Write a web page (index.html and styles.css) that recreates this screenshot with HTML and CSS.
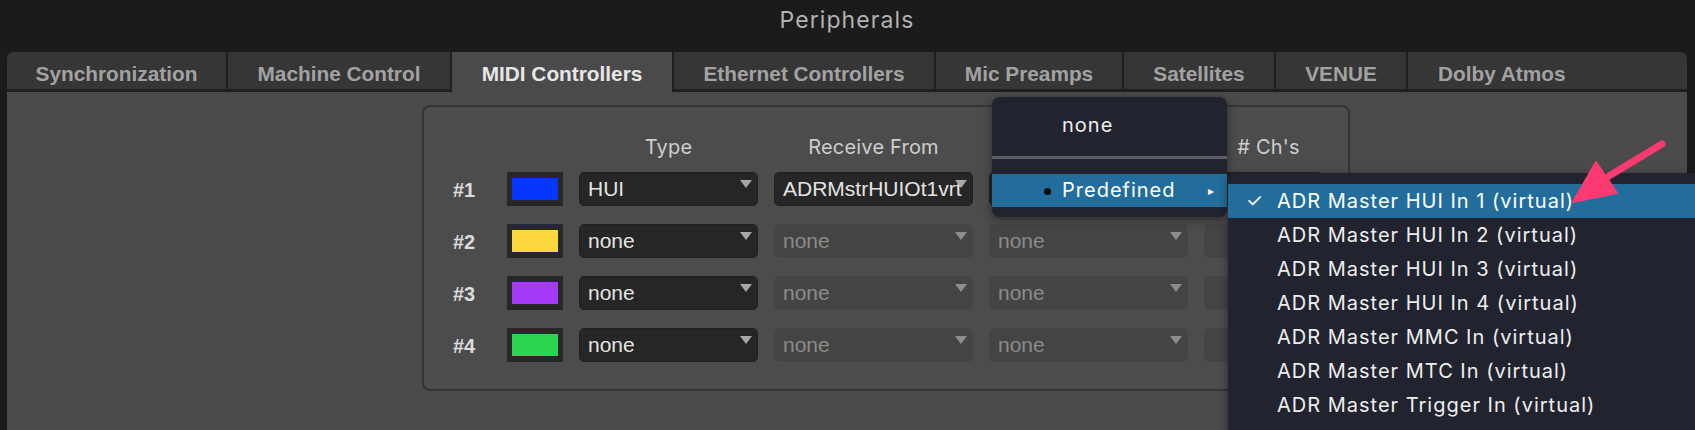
FILE: index.html
```html
<!DOCTYPE html>
<html lang="en">
<head>
<meta charset="utf-8">
<title>Peripherals</title>
<link rel="stylesheet" href="styles.css">
</head>
<body>
<div class="window">
  <header class="titlebar">Peripherals</header>
  <nav class="tabs">
    <div class="tab w1">Synchronization</div>
    <div class="tab w2">Machine Control</div>
    <div class="tab w3 active">MIDI Controllers</div>
    <div class="tab w4">Ethernet Controllers</div>
    <div class="tab w5">Mic Preamps</div>
    <div class="tab w6">Satellites</div>
    <div class="tab w7">VENUE</div>
    <div class="tab last">Dolby Atmos</div>
  </nav>
  <main class="panel">
    <section class="group">
      <div class="grid">
        <div class="hcell"></div><div class="hcell"></div>
        <div class="hcell hdr">Type</div>
        <div class="hcell hdr">Receive From</div>
        <div class="hcell"></div>
        <div class="hcell hdr ch">#&nbsp;Ch's</div>

        <div class="num">#1</div>
        <div class="swatch"><span class="c-blue"></span></div>
        <div class="dd">HUI</div>
        <div class="dd">ADRMstrHUIOt1vrt</div>
        <div class="dd"></div>
        <div class="dd"></div>

        <div class="num">#2</div>
        <div class="swatch"><span class="c-yellow"></span></div>
        <div class="dd">none</div>
        <div class="dd off">none</div>
        <div class="dd off">none</div>
        <div class="dd off"></div>

        <div class="num">#3</div>
        <div class="swatch"><span class="c-purple"></span></div>
        <div class="dd">none</div>
        <div class="dd off">none</div>
        <div class="dd off">none</div>
        <div class="dd off"></div>

        <div class="num">#4</div>
        <div class="swatch"><span class="c-green"></span></div>
        <div class="dd">none</div>
        <div class="dd off">none</div>
        <div class="dd off">none</div>
        <div class="dd off"></div>
      </div>
    </section>
  </main>

  <div class="menu popup">
    <div class="item plain">none</div>
    <div class="sep"></div>
    <div class="item hi"><span class="dot"></span>Predefined<span class="sub">&#9656;</span></div>
  </div>

  <div class="menu submenu">
    <div class="item hi"><span class="check">&#10003;</span>ADR Master HUI In 1 (virtual)</div>
    <div class="item">ADR Master HUI In 2 (virtual)</div>
    <div class="item">ADR Master HUI In 3 (virtual)</div>
    <div class="item">ADR Master HUI In 4 (virtual)</div>
    <div class="item">ADR Master MMC In (virtual)</div>
    <div class="item">ADR Master MTC In (virtual)</div>
    <div class="item">ADR Master Trigger In (virtual)</div>
  </div>

  <svg class="pointer" width="120" height="80" viewBox="0 0 120 80">
    <line x1="44" y1="44" x2="102" y2="9" stroke="#fb3a72" stroke-width="7" stroke-linecap="round"/>
    <polygon points="13,67 36,27 57,58" fill="#fb3a72" stroke="#fb3a72" stroke-width="2" stroke-linejoin="round"/>
  </svg>
</div>
</body>
</html>
```

FILE: styles.css
```css
* { box-sizing: border-box; }
html, body { margin: 0; padding: 0; }
body {
  background: #1b1b1b;
  width: 1695px;
  height: 430px;
  overflow: hidden;
  font-family: "Liberation Sans", Arial, sans-serif;
}
.window {
  position: relative;
  height: 430px;
  display: flex;
  flex-direction: column;
  padding: 0 8px 0 7px;
}
.titlebar {
  height: 52px;
  line-height: 40px;
  text-align: center;
  color: #b2b2b2;
  font-family: "Inter", "Open Sans", sans-serif;
  font-size: 23px;
  letter-spacing: 1.1px;
}
.tabs {
  display: flex;
  height: 40px;
}
.tab {
  height: 40px;
  background: #363636;
  border-right: 2px solid #1f1f1f;
  border-bottom: 3px solid #1f1f1f;
  color: #a2a2a2;
  font-weight: bold;
  font-size: 20.8px;
  line-height: 44px;
  text-align: center;
  white-space: nowrap;
  overflow: hidden;
}
.tab.w1 { width: 221px; border-top-left-radius: 6px; }
.tab.w2 { width: 224px; }
.tab.w3 { width: 222px; }
.tab.w4 { width: 262px; }
.tab.w5 { width: 188px; }
.tab.w6 { width: 152px; }
.tab.w7 { width: 132px; }
.tab.last {
  flex: 1;
  text-align: left;
  padding-left: 30px;
  border-right: none;
  border-top-right-radius: 6px;
}
.tab.active {
  background: #4a4a4a;
  color: #e6e6e6;
  border-bottom: none;
}
.panel {
  flex: 1;
  background: #4a4a4a;
  padding: 13px 0 0 415px;
}
.group {
  width: 928px;
  height: 286px;
  background: #4c4c4c;
  border: 2px solid #343434;
  border-radius: 8px;
  padding: 13px 0 0 29px;
}
.grid {
  display: grid;
  grid-template-columns: 38px 56px 179px 199px 199px 119px;
  grid-template-rows: repeat(5, 34px);
  column-gap: 16px;
  row-gap: 18px;
  align-items: center;
}
.hcell {
  align-self: end;
  margin-bottom: -3px;
}
.hdr {
  text-align: center;
  color: #cdcdcd;
  font-family: "Inter", "Open Sans", sans-serif;
  font-size: 20px;
  letter-spacing: 0.2px;
  line-height: 20px;
  white-space: nowrap;
}
.hdr.ch { padding-left: 10px; }
.num {
  color: #dcdcdc;
  font-weight: bold;
  font-size: 20px;
  padding-top: 3px;
  white-space: nowrap;
}
.swatch {
  width: 56px;
  height: 34px;
  background: #272727;
  padding: 6px 5px;
}
.swatch span {
  display: block;
  width: 100%;
  height: 100%;
}
.c-blue { background: #0637ff; }
.c-yellow { background: #fdd83c; }
.c-purple { background: #a43af8; }
.c-green { background: #2ad650; }
.dd {
  position: relative;
  height: 34px;
  background: #262626;
  border: 1px solid #202020;
  border-radius: 5px;
  color: #e4e4e4;
  font-size: 21px;
  line-height: 32px;
  padding-left: 8px;
  white-space: nowrap;
  overflow: hidden;
}
.dd::after {
  content: "";
  position: absolute;
  right: 5px;
  top: 7px;
  width: 0;
  height: 0;
  border-left: 6.5px solid transparent;
  border-right: 6.5px solid transparent;
  border-top: 8px solid #a8a8a8;
}
.dd.off {
  background: #444444;
  border-color: #464646;
  color: #8b8b8b;
}
.dd.off::after { border-top-color: #8d8d8d; }

.menu {
  position: absolute;
  background: #21242f;
  font-family: "Inter", "Open Sans", sans-serif;
  font-size: 20px;
  letter-spacing: 1px;
  color: #eeeeee;
  box-shadow: 0 3px 10px rgba(0, 0, 0, 0.45);
}
.popup {
  left: 992px;
  top: 97px;
  width: 235px;
  height: 120px;
  border-radius: 8px;
  padding-top: 12px;
}
.popup .item {
  position: relative;
  height: 33px;
  line-height: 33px;
  padding-left: 70px;
  white-space: nowrap;
}
.popup .sep {
  height: 32px;
  padding-top: 14px;
}
.popup .sep::before {
  content: "";
  display: block;
  height: 3px;
  background: #5c5e64;
}
.item.hi { background: #226d9c; color: #ffffff; }
.dot {
  position: absolute;
  left: 52px;
  top: 14px;
  width: 7px;
  height: 7px;
  border-radius: 50%;
  background: #0a0a0a;
}
.sub {
  position: absolute;
  left: 216px;
  top: 0;
  font-size: 12px;
  letter-spacing: 0;
}
.submenu {
  left: 1228px;
  top: 173px;
  width: 480px;
  height: 270px;
  border-top-left-radius: 8px;
  padding-top: 11px;
}
.submenu .item {
  position: relative;
  height: 34px;
  line-height: 34px;
  padding-left: 49px;
  white-space: nowrap;
}
.check {
  position: absolute;
  left: 18px;
  top: 0;
  font-size: 19px;
  letter-spacing: 0;
}
.pointer {
  position: absolute;
  left: 1560px;
  top: 135px;
}
```
